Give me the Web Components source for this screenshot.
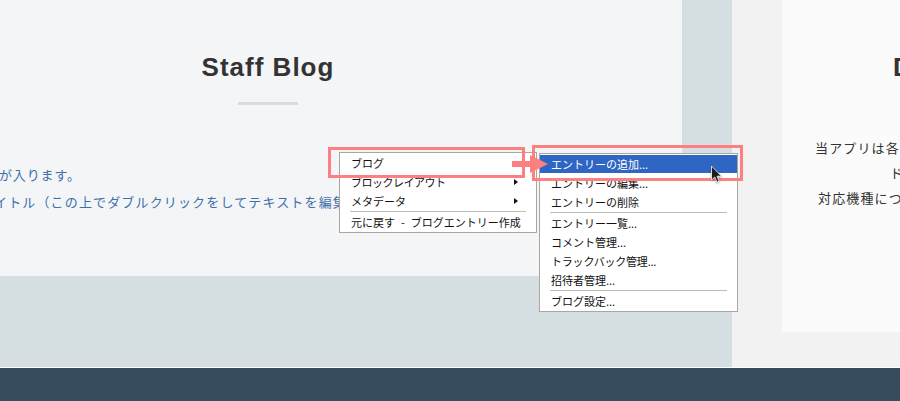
<!DOCTYPE html>
<html lang="ja">
<head>
<meta charset="utf-8">
<title>Staff Blog</title>
<style>
  html, body { margin: 0; height: 100%; }
  body { font-family: "Liberation Sans", "Noto Sans CJK JP", sans-serif; overflow: hidden; }
</style>
</head>
<body>
<help-page>
  <blog-band slot="left" title="Staff Blog">
    <div style="color:#3f6fa8;height:27px;line-height:27px;letter-spacing:.85px;margin-left:-1px">が入ります。</div>
    <div style="color:#3f6fa8;height:27px;line-height:27px;margin-left:-6px">イトル（この上でダブルクリックをしてテキストを編集</div>
  </blog-band>
  <app-band slot="right" title="D">
    <div style="margin-left:33px">当アプリは各</div>
    <div style="margin-left:108px">ド</div>
    <div style="margin-left:36px">対応機種につ</div>
  </app-band>

  <ctx-menu slot="overlay" style="left:339px;top:152px;width:198px">
    <ctx-item>ブログ</ctx-item>
    <ctx-item sub style="letter-spacing:-.5px">ブロックレイアウト</ctx-item>
    <ctx-item sub>メタデータ</ctx-item>
    <ctx-sep></ctx-sep>
    <ctx-item style="word-spacing:3.5px">元に戻す - ブログエントリー作成</ctx-item>
  </ctx-menu>
  <ctx-menu slot="overlay" style="left:539px;top:153px;width:199px">
    <ctx-item active>エントリーの追加...</ctx-item>
    <ctx-item>エントリーの編集...</ctx-item>
    <ctx-item>エントリーの削除</ctx-item>
    <ctx-sep></ctx-sep>
    <ctx-item>エントリー一覧...</ctx-item>
    <ctx-item>コメント管理...</ctx-item>
    <ctx-item style="letter-spacing:-.2px">トラックバック管理...</ctx-item>
    <ctx-item>招待者管理...</ctx-item>
    <ctx-sep></ctx-sep>
    <ctx-item>ブログ設定...</ctx-item>
  </ctx-menu>

  <hint-box slot="overlay" style="left:328px;top:147px;width:197px;height:31px"></hint-box>
  <hint-box slot="overlay" style="left:532px;top:145px;width:211px;height:36px"></hint-box>
  <hint-arrow slot="overlay" style="left:512px;top:155px"></hint-arrow>
  <mouse-cursor slot="overlay" style="left:710px;top:165px"></mouse-cursor>
</help-page>

<script>
class HelpPage extends HTMLElement {
  constructor() {
    super();
    this.attachShadow({ mode: 'open' });
    this.shadowRoot.innerHTML = `
      <style>
        :host { display: flex; flex-direction: column; position: relative; width: 900px; height: 401px; overflow: hidden; background: #fff; }
        .bands { display: flex; height: 367px; }
        .foot { margin-top: 1px; height: 33px; background: #364d5d; }
      </style>
      <div class="bands"><slot name="left"></slot><slot name="right"></slot></div>
      <div class="foot"></div>
      <slot name="overlay"></slot>
    `;
  }
}

class BlogBand extends HTMLElement {
  constructor() {
    super();
    this.attachShadow({ mode: 'open' });
    this.shadowRoot.innerHTML = `
      <style>
        :host { display: block; flex: none; width: 732px; height: 100%; background: #d5dee0; }
        .panel { width: 682px; height: 276px; background: #f3f5f7; overflow: hidden; }
        .head { width: 536px; text-align: center; }
        h2 { margin: 0; padding-top: 51px; font: bold 26px/32px "Liberation Sans", sans-serif; letter-spacing: 1px; color: #333; }
        .rule { width: 60px; height: 3px; margin: 19px auto 0; background: #d5dee0; }
        .copy { margin-top: 56px; font: 13px "Noto Sans CJK JP", sans-serif; letter-spacing: 1.15px; white-space: nowrap; }
      </style>
      <div class="panel">
        <div class="head"><h2></h2><div class="rule"></div></div>
        <div class="copy"><slot></slot></div>
      </div>
    `;
    this.shadowRoot.querySelector('h2').textContent = this.getAttribute('title');
  }
}

class AppBand extends HTMLElement {
  constructor() {
    super();
    this.attachShadow({ mode: 'open' });
    this.shadowRoot.innerHTML = `
      <style>
        :host { display: block; flex: 1; min-width: 0; height: 100%; padding-left: 50px; background: #f2f2f2; }
        .panel { height: 332px; background: #fbfbfb; overflow: hidden; }
        h2 { margin: 0; padding: 51px 0 0 111px; font: bold 26px/32px "Liberation Sans", sans-serif; color: #333; }
        .copy { margin-top: 52px; font: 13px/25px "Noto Sans CJK JP", sans-serif; letter-spacing: 1.15px; color: #333; white-space: nowrap; }
      </style>
      <div class="panel">
        <h2></h2>
        <div class="copy"><slot></slot></div>
      </div>
    `;
    this.shadowRoot.querySelector('h2').textContent = this.getAttribute('title');
  }
}

class CtxMenu extends HTMLElement {
  constructor() {
    super();
    this.attachShadow({ mode: 'open' });
    this.shadowRoot.innerHTML = `
      <style>
        :host { display: flex; flex-direction: column; position: absolute; box-sizing: border-box; padding: 1px 0 0; border: 1px solid #aaa89c; background: #fff; }
      </style>
      <slot></slot>
    `;
  }
}

class CtxItem extends HTMLElement {
  constructor() {
    super();
    this.attachShadow({ mode: 'open' });
    this.shadowRoot.innerHTML = `
      <style>
        :host { display: flex; align-items: center; height: 18px; margin-bottom: 1px; padding: 0 10px 0 11px; font: 11px/18px "Noto Sans CJK JP", sans-serif; color: #111; white-space: nowrap; }
        :host([active]) { background: #2f66c4; color: #fff; }
        .tri { display: none; margin-left: auto; margin-right: 8px; border-left: 4px solid #111; border-top: 3px solid transparent; border-bottom: 3px solid transparent; }
        :host([sub]) .tri { display: block; }
      </style>
      <slot></slot><span class="tri"></span>
    `;
  }
}

class CtxSep extends HTMLElement {
  constructor() {
    super();
    this.attachShadow({ mode: 'open' });
    this.shadowRoot.innerHTML = `
      <style>
        :host { display: block; height: 1px; margin: 0 10px 1px; background: #bdbdb8; }
      </style>
    `;
  }
}

class HintBox extends HTMLElement {
  constructor() {
    super();
    this.attachShadow({ mode: 'open' });
    this.shadowRoot.innerHTML = `
      <style>
        :host { display: block; position: absolute; box-sizing: border-box; border: 3px solid #fe7f82; }
      </style>
    `;
  }
}

class HintArrow extends HTMLElement {
  constructor() {
    super();
    this.attachShadow({ mode: 'open' });
    this.shadowRoot.innerHTML = `
      <style>
        :host { display: block; position: absolute; width: 36px; height: 18px; }
        svg { display: block; }
      </style>
      <svg width="36" height="18" viewBox="0 0 36 18"><path d="M0 6H18V0L36 9L18 18V12H0Z" fill="#fe7f82"/></svg>
    `;
  }
}

class MouseCursor extends HTMLElement {
  constructor() {
    super();
    this.attachShadow({ mode: 'open' });
    this.shadowRoot.innerHTML = `
      <style>
        :host { display: block; position: absolute; width: 14px; height: 20px; }
        svg { display: block; filter: drop-shadow(0 1px 1px rgba(0,0,0,.35)); }
      </style>
      <svg width="14" height="20" viewBox="0 0 14 20"><path d="M1.5 1V15L4.7 12L7 17.2L9.2 16.2L7 11.2H11.5Z" fill="#1c1c1c" stroke="#fff" stroke-width=".8"/></svg>
    `;
  }
}

customElements.define('help-page', HelpPage);
customElements.define('blog-band', BlogBand);
customElements.define('app-band', AppBand);
customElements.define('ctx-menu', CtxMenu);
customElements.define('ctx-item', CtxItem);
customElements.define('ctx-sep', CtxSep);
customElements.define('hint-box', HintBox);
customElements.define('hint-arrow', HintArrow);
customElements.define('mouse-cursor', MouseCursor);
</script>
</body>
</html>
